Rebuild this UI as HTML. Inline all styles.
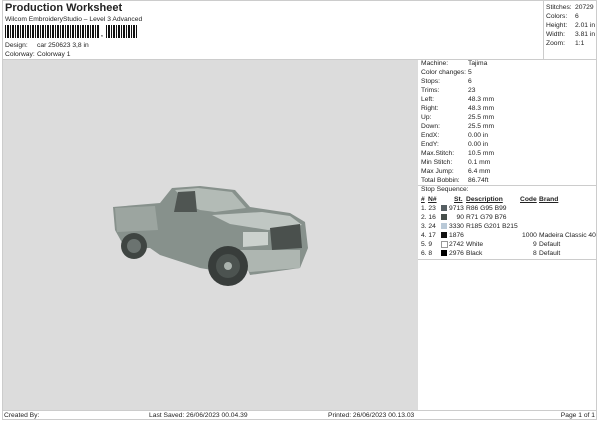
<!DOCTYPE html>
<html><head><style>
body{margin:0;width:600px;height:424px;background:#fff;font-family:"Liberation Sans",sans-serif;font-size:6.7px;color:#222;position:relative;overflow:hidden}
.a{position:absolute;white-space:nowrap;line-height:9px}
</style></head><body>
<div style="position:absolute;left:2px;top:0;width:595px;height:420px;border:1px solid #ccc;box-sizing:border-box"></div>
<div class="a" style="left:5px;top:2px;font-size:11px;font-weight:bold;line-height:13px">Production Worksheet</div>
<div class="a" style="left:5px;top:15px">Wilcom EmbroideryStudio – Level 3 Advanced</div>
<div style="position:absolute;left:5px;top:25px;width:95px;height:13px;background:repeating-linear-gradient(90deg,#111 0 1px,#fff 1px 2px,#111 2px 4px,#fff 4px 5px)"></div>
<div class="a" style="left:101px;top:30px;font-weight:bold">,</div>
<div style="position:absolute;left:106px;top:25px;width:31px;height:13px;background:repeating-linear-gradient(90deg,#111 0 1px,#fff 1px 2px,#111 2px 4px,#fff 4px 5px)"></div>
<div class="a" style="left:5px;top:41px">Design:</div><div class="a" style="left:37px;top:41px">car 250623 3,8 in</div>
<div class="a" style="left:5px;top:50px">Colorway:</div><div class="a" style="left:37px;top:50px">Colorway 1</div>
<div style="position:absolute;left:543px;top:0;width:1px;height:59px;background:#ccc"></div>
<div style="position:absolute;left:2px;top:59px;width:595px;height:1px;background:#ccc"></div>
<div class="a" style="left:546px;top:3px">Stitches:</div><div class="a" style="left:575px;top:3px">20729</div>
<div class="a" style="left:546px;top:12px">Colors:</div><div class="a" style="left:575px;top:12px">6</div>
<div class="a" style="left:546px;top:21px">Height:</div><div class="a" style="left:575px;top:21px">2.01 in</div>
<div class="a" style="left:546px;top:30px">Width:</div><div class="a" style="left:575px;top:30px">3.81 in</div>
<div class="a" style="left:546px;top:39px">Zoom:</div><div class="a" style="left:575px;top:39px">1:1</div>
<div style="position:absolute;left:3px;top:60px;width:415px;height:350px;background:#dcdcdc"></div>
<svg style="position:absolute;left:0;top:0" width="600" height="424">
<path d="M113 207 L160 203 L172 188 L200 186 L235 190 L250 207 L290 213 L305 222 L308 248 L300 268 L250 275 L245 262 L215 262 L212 270 L200 268 L160 255 L150 248 L125 248 L115 230 Z" fill="#87918c"/>
<path d="M175 190 L198 188 L232 192 L246 208 L215 212 L200 210 L190 206 Z" fill="#b3bbb6"/>
<path d="M178 192 L195 191 L197 212 L174 212 Z" fill="#4f5552"/>
<path d="M212 215 L262 212 L290 216 L302 225 L268 230 L230 224 Z" fill="#c0c7c3"/>
<path d="M270 228 L300 224 L302 248 L272 250 Z" fill="#4a504d"/>
<path d="M243 232 L268 232 L268 245 L243 247 Z" fill="#ccd2ce"/>
<path d="M214 250 L300 250 L300 268 L250 272 Z" fill="#aeb6b1"/>
<path d="M115 208 L155 206 L158 230 L117 232 Z" fill="#9ca5a0"/>
<circle cx="134" cy="246" r="13" fill="#3f4542"/><circle cx="134" cy="246" r="7" fill="#6b7370"/>
<circle cx="228" cy="266" r="20" fill="#383d3b"/><circle cx="228" cy="266" r="12" fill="#4c5350"/><circle cx="228" cy="266" r="4" fill="#aab2ad"/>
</svg>
<div class="a" style="left:421px;top:59px">Machine:</div><div class="a" style="left:468px;top:59px">Tajima</div>
<div class="a" style="left:421px;top:68px">Color changes:</div><div class="a" style="left:468px;top:68px">5</div>
<div class="a" style="left:421px;top:77px">Stops:</div><div class="a" style="left:468px;top:77px">6</div>
<div class="a" style="left:421px;top:86px">Trims:</div><div class="a" style="left:468px;top:86px">23</div>
<div class="a" style="left:421px;top:95px">Left:</div><div class="a" style="left:468px;top:95px">48.3 mm</div>
<div class="a" style="left:421px;top:104px">Right:</div><div class="a" style="left:468px;top:104px">48.3 mm</div>
<div class="a" style="left:421px;top:113px">Up:</div><div class="a" style="left:468px;top:113px">25.5 mm</div>
<div class="a" style="left:421px;top:122px">Down:</div><div class="a" style="left:468px;top:122px">25.5 mm</div>
<div class="a" style="left:421px;top:131px">EndX:</div><div class="a" style="left:468px;top:131px">0.00 in</div>
<div class="a" style="left:421px;top:140px">EndY:</div><div class="a" style="left:468px;top:140px">0.00 in</div>
<div class="a" style="left:421px;top:149px">Max.Stitch:</div><div class="a" style="left:468px;top:149px">10.5 mm</div>
<div class="a" style="left:421px;top:158px">Min Stitch:</div><div class="a" style="left:468px;top:158px">0.1 mm</div>
<div class="a" style="left:421px;top:167px">Max Jump:</div><div class="a" style="left:468px;top:167px">6.4 mm</div>
<div class="a" style="left:421px;top:176px">Total Bobbin:</div><div class="a" style="left:468px;top:176px">86.74ft</div>
<div style="position:absolute;left:418px;top:185px;width:179px;height:1px;background:#ccc"></div>
<div class="a" style="left:421px;top:185px">Stop Sequence:</div>
<div class="a" style="left:421px;top:195px;font-weight:bold;text-decoration:underline">#</div>
<div class="a" style="left:428px;top:195px;font-weight:bold;text-decoration:underline">N#</div>
<div class="a" style="left:454px;top:195px;font-weight:bold;text-decoration:underline">St.</div>
<div class="a" style="left:466px;top:195px;font-weight:bold;text-decoration:underline">Description</div>
<div class="a" style="left:520px;top:195px;font-weight:bold;text-decoration:underline">Code</div>
<div class="a" style="left:539px;top:195px;font-weight:bold;text-decoration:underline">Brand</div>
<div class="a" style="left:421px;top:204px">1. 23</div><div style="position:absolute;left:441px;top:205px;width:6px;height:6px;background:#565f63"></div><div class="a" style="left:449px;top:204px">9713</div><div class="a" style="left:466px;top:204px">R86 G95 B99</div>
<div class="a" style="left:421px;top:213px">2. 16</div><div style="position:absolute;left:441px;top:214px;width:6px;height:6px;background:#474f4c"></div><div class="a" style="left:449px;top:213px;width:15px;text-align:right">90</div><div class="a" style="left:466px;top:213px">R71 G79 B76</div>
<div class="a" style="left:421px;top:222px">3. 24</div><div style="position:absolute;left:441px;top:223px;width:6px;height:6px;background:#b9c9d7"></div><div class="a" style="left:449px;top:222px">3330</div><div class="a" style="left:466px;top:222px">R185 G201 B215</div>
<div class="a" style="left:421px;top:231px">4. 17</div><div style="position:absolute;left:441px;top:232px;width:6px;height:6px;background:#111"></div><div class="a" style="left:449px;top:231px">1876</div><div class="a" style="left:522px;top:231px">1000</div><div class="a" style="left:539px;top:231px">Madeira Classic 40</div>
<div class="a" style="left:421px;top:240px">5. 9</div><div style="position:absolute;left:441px;top:241px;width:5px;height:5px;border:1px solid #999;background:#fff"></div><div class="a" style="left:449px;top:240px">2742</div><div class="a" style="left:466px;top:240px">White</div><div class="a" style="left:533px;top:240px">9</div><div class="a" style="left:539px;top:240px">Default</div>
<div class="a" style="left:421px;top:249px">6. 8</div><div style="position:absolute;left:441px;top:250px;width:6px;height:6px;background:#000"></div><div class="a" style="left:449px;top:249px">2976</div><div class="a" style="left:466px;top:249px">Black</div><div class="a" style="left:533px;top:249px">8</div><div class="a" style="left:539px;top:249px">Default</div>
<div style="position:absolute;left:418px;top:259px;width:179px;height:1px;background:#ccc"></div>
<div style="position:absolute;left:2px;top:410px;width:595px;height:1px;background:#ccc"></div>
<div class="a" style="left:4px;top:411px">Created By:</div>
<div class="a" style="left:149px;top:411px">Last Saved: 26/06/2023 00.04.39</div>
<div class="a" style="left:328px;top:411px">Printed: 26/06/2023 00.13.03</div>
<div class="a" style="right:5px;top:411px">Page 1 of 1</div>
</body></html>
